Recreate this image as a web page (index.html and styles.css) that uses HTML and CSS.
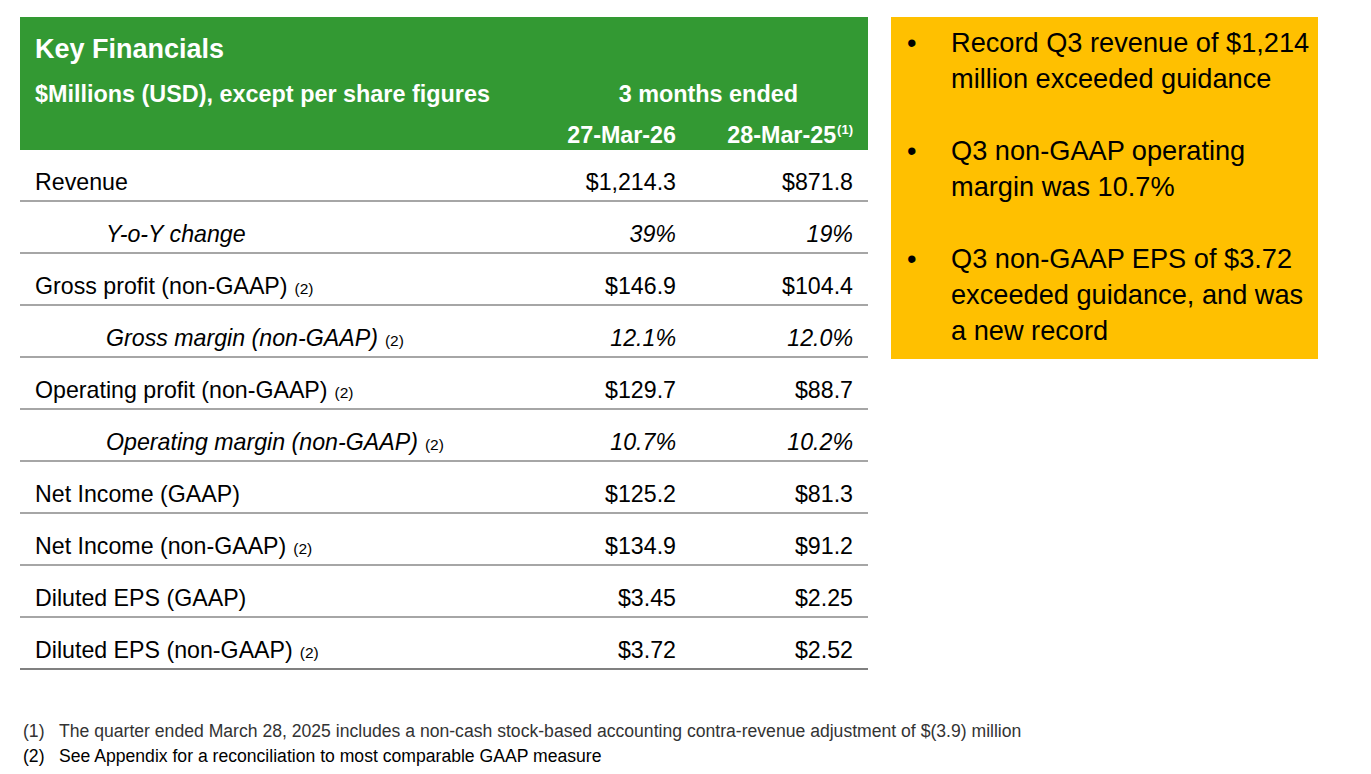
FILE: index.html
```html
<!DOCTYPE html>
<html lang="en">
<head>
<meta charset="utf-8">
<title>Key Financials</title>
<link rel="stylesheet" href="styles.css">
</head>
<body>
<div class="slide">
  <div class="top">
    <section class="table">
      <div class="hdr">
        <div class="title">Key Financials</div>
        <div class="sub">$Millions (USD), except per share figures</div>
        <div class="period">3 months ended</div>
        <div class="blank"></div>
        <div class="date">27-Mar-26</div>
        <div class="date">28-Mar-25<sup class="hsup">(1)</sup></div>
      </div>
      <div class="row"><div class="lbl">Revenue</div><div class="val">$1,214.3</div><div class="val">$871.8</div></div>
      <div class="row sub-row"><div class="lbl">Y-o-Y change</div><div class="val">39%</div><div class="val">19%</div></div>
      <div class="row"><div class="lbl">Gross profit (non-GAAP)<span class="fn">(2)</span></div><div class="val">$146.9</div><div class="val">$104.4</div></div>
      <div class="row sub-row"><div class="lbl">Gross margin (non-GAAP)<span class="fn">(2)</span></div><div class="val">12.1%</div><div class="val">12.0%</div></div>
      <div class="row"><div class="lbl">Operating profit (non-GAAP)<span class="fn">(2)</span></div><div class="val">$129.7</div><div class="val">$88.7</div></div>
      <div class="row sub-row"><div class="lbl">Operating margin (non-GAAP)<span class="fn">(2)</span></div><div class="val">10.7%</div><div class="val">10.2%</div></div>
      <div class="row"><div class="lbl">Net Income (GAAP)</div><div class="val">$125.2</div><div class="val">$81.3</div></div>
      <div class="row"><div class="lbl">Net Income (non-GAAP)<span class="fn">(2)</span></div><div class="val">$134.9</div><div class="val">$91.2</div></div>
      <div class="row"><div class="lbl">Diluted EPS (GAAP)</div><div class="val">$3.45</div><div class="val">$2.25</div></div>
      <div class="row last"><div class="lbl">Diluted EPS (non-GAAP)<span class="fn">(2)</span></div><div class="val">$3.72</div><div class="val">$2.52</div></div>
    </section>
    <aside class="highlights">
      <ul>
        <li>Record Q3 revenue of $1,214 million exceeded guidance</li>
        <li>Q3 non-GAAP operating margin was 10.7%</li>
        <li>Q3 non-GAAP EPS of $3.72 exceeded guidance, and was a new record</li>
      </ul>
    </aside>
  </div>
  <ol class="notes">
    <li class="n1"><span class="num">(1)</span><span>The quarter ended March 28, 2025 includes a non-cash stock-based accounting contra-revenue adjustment of $(3.9) million</span></li>
    <li class="n2"><span class="num">(2)</span><span>See Appendix for a reconciliation to most comparable GAAP measure</span></li>
  </ol>
</div>
</body>
</html>
```
FILE: styles.css
```css
* { box-sizing: border-box; }
html, body { margin: 0; padding: 0; background: #fff; }
body {
  font-family: "Liberation Sans", Arial, sans-serif;
  color: #000;
  width: 1371px;
  height: 774px;
  overflow: hidden;
}
.slide { padding: 17px 0 0 0; }
.top {
  display: flex;
  align-items: flex-start;
  gap: 23px;
  padding-left: 20px;
}
.table { width: 848px; }
.hdr {
  background: #339933;
  color: #fff;
  height: 133px;
  display: grid;
  grid-template-columns: 494px 177px 177px;
  grid-template-rows: auto auto auto;
  align-content: start;
  padding-top: 17px;
  font-weight: bold;
}
.title {
  grid-column: 1 / 4;
  font-size: 27px;
  line-height: 30px;
  padding-left: 15px;
}
.sub {
  margin-top: 17px;
  font-size: 23.4px;
  line-height: 26px;
  padding-left: 15px;
  white-space: nowrap;
}
.period {
  margin-top: 17px;
  grid-column: 2 / 4;
  font-size: 23.4px;
  line-height: 26px;
  text-align: right;
  padding-right: 70px;
  white-space: nowrap;
}
.blank { margin-top: 15px; }
.date {
  margin-top: 15px;
  font-size: 23.3px;
  line-height: 26px;
  text-align: right;
  padding-right: 15px;
  white-space: nowrap;
}
.hsup {
  font-size: 13px;
  vertical-align: 9px;
  line-height: 0;
  margin-left: 1px;
}
.row {
  display: grid;
  grid-template-columns: 494px 177px 177px;
  height: 52px;
  padding-top: 19px;
  border-bottom: 2px solid #a6a6a6;
  font-size: 23.2px;
  line-height: 27px;
}
.row.last { border-bottom-color: #808080; }
.lbl { padding-left: 15px; white-space: nowrap; }
.val { text-align: right; padding-right: 15px; white-space: nowrap; }
.sub-row { font-style: italic; }
.sub-row .lbl { padding-left: 86px; }
.fn {
  font-size: 15.5px;
  font-style: normal;
  margin-left: 7px;
}
.highlights {
  width: 427px;
  height: 342px;
  background: #ffc000;
  padding: 8px 4px 0 16px;
}
.highlights ul {
  list-style: none;
  margin: 0;
  padding: 0;
  font-size: 27.2px;
  line-height: 36px;
}
.highlights li {
  display: grid;
  grid-template-columns: 44px 1fr;
}
.highlights li::before {
  content: "\2022";
}
.highlights li + li { margin-top: 36px; }
.notes {
  list-style: none;
  margin: 49px 0 0 0;
  padding: 0 0 0 23px;
  font-size: 17.6px;
  line-height: 24.5px;
}
.notes li { display: flex; white-space: nowrap; }
.notes .num { width: 36px; }
.notes .n1 { color: #333; }
```
